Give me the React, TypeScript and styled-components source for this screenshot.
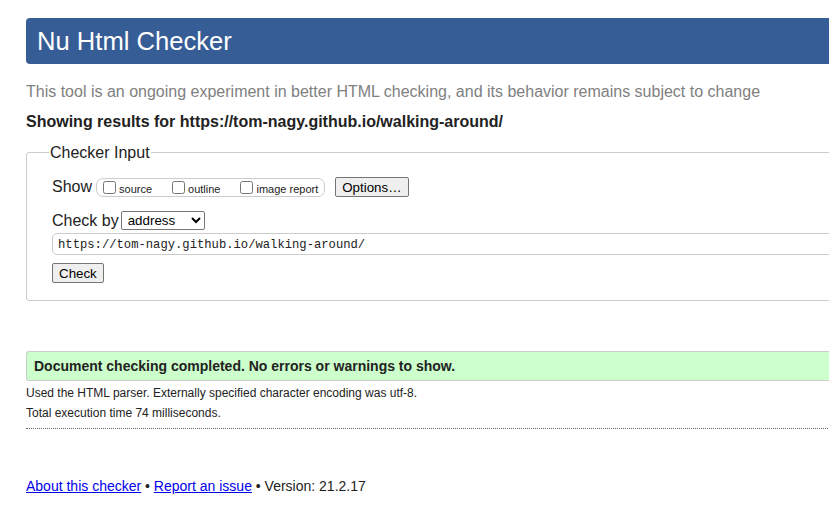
import React from 'react'
import styled, { createGlobalStyle } from 'styled-components'

const GlobalStyle = createGlobalStyle`
  html, body {
    margin: 0;
    padding: 0;
    background: #fff;
    overflow: hidden;
  }
  body {
    font-family: "Liberation Sans", Arial, sans-serif;
    color: #222;
  }
`

const Page = styled.div`
  width: 1000px;
  padding: 18px 0 0 26px;
`

const Header = styled.h1`
  margin: 0;
  height: 46px;
  line-height: 46px;
  padding-left: 11px;
  background: #365d95;
  color: #fff;
  font-size: 25.6px;
  font-weight: normal;
  border-radius: 4px 0 0 4px;
`

const Intro = styled.p`
  margin: 18px 0 0;
  font-size: 16px;
  line-height: 19px;
  color: #808080;
`

const ResultsFor = styled.p`
  margin: 11px 0 0;
  font-size: 16px;
  line-height: 19px;
  font-weight: bold;
`

const Fieldset = styled.fieldset`
  margin: 12px 0 0;
  padding: 15px 20px 17px 25px;
  border: 1px solid #ccc;
  border-radius: 3px 0 0 3px;
  min-inline-size: 0;
`

const Legend = styled.legend`
  margin-left: -3px;
  padding: 0 1px;
  font-size: 16px;
  line-height: 19px;
`

const Row = styled.div`
  display: flex;
  align-items: center;
  font-size: 16px;
  margin-top: ${({ $gap }: { $gap?: number }) => $gap ?? 0}px;
`

const Label = styled.span`
  margin-right: 4px;
`

const OptionGroup = styled.span`
  display: inline-flex;
  align-items: center;
  gap: 20px;
  height: 17px;
  padding: 0 6px 0 6px;
  border: 1px solid #ccc;
  border-radius: 7px;
  margin-right: 10px;
`

const Option = styled.label`
  display: inline-flex;
  align-items: center;
  font-size: 11px;

  input {
    width: 13px;
    height: 13px;
    margin: 0 3px 0 0;
  }
`

const OptionText = styled.span`
  padding-top: 3px;
`

const Button = styled.button`
  font-family: "Liberation Sans", Arial, sans-serif;
  font-size: 13.33px;
  height: 20px;
  padding: 0 6px;
  background: #efefef;
  color: #000;
  border: 1px solid #767676;
  border-radius: 2px;
`

const Select = styled.select`
  font-family: "Liberation Sans", Arial, sans-serif;
  font-size: 13.33px;
  width: 84px;
  height: 19px;
  margin-left: -2px;
  padding: 0 2px;
  border: 1px solid #767676;
  border-radius: 2px;
  background: #fff;
  color: #000;
`

const UrlInput = styled.input`
  box-sizing: border-box;
  width: 100%;
  height: 22px;
  margin-top: 3px;
  padding: 1px 5px 0;
  font-family: "Liberation Mono", "DejaVu Sans Mono", monospace;
  font-size: 12.2px;
  color: #222;
  border: 1px solid #ccc;
  border-radius: 5px 0 0 5px;
  outline: none;
`

const Success = styled.div`
  margin-top: 50px;
  height: 28px;
  line-height: 28px;
  padding-left: 7px;
  background: #ccffcc;
  border: 1px solid #ccc;
  border-right: none;
  border-radius: 3px 0 0 3px;
  font-size: 14px;
  font-weight: bold;
`

const Detail = styled.p`
  margin: 0;
  font-size: 12px;
  line-height: 20px;
`

const Details = styled.div`
  padding-top: 2px;
  padding-bottom: 5px;
  border-bottom: 1px dotted #666;
`

const Footer = styled.p`
  margin: 49px 0 0;
  font-size: 14px;
  line-height: 17px;
  color: #222;

  a {
    color: #0000ee;
    text-decoration: underline;
  }
`

const url = 'https://tom-nagy.github.io/walking-around/'

export default function App() {
  return (
    <Page>
      <GlobalStyle />
      <Header>Nu Html Checker</Header>
      <Intro>
        This tool is an ongoing experiment in better HTML checking, and its behavior remains subject to change
      </Intro>
      <ResultsFor>Showing results for {url}</ResultsFor>
      <Fieldset>
        <Legend>Checker Input</Legend>
        <Row>
          <Label>Show</Label>
          <OptionGroup>
            <Option>
              <input type="checkbox" />
              <OptionText>source</OptionText>
            </Option>
            <Option>
              <input type="checkbox" />
              <OptionText>outline</OptionText>
            </Option>
            <Option>
              <input type="checkbox" />
              <OptionText>image report</OptionText>
            </Option>
          </OptionGroup>
          <Button type="button">Options…</Button>
        </Row>
        <Row $gap={14}>
          <Label>Check by</Label>
          <Select defaultValue="address">
            <option value="address">address</option>
            <option value="file">file upload</option>
            <option value="text">text input</option>
          </Select>
        </Row>
        <UrlInput defaultValue={url} />
        <Row $gap={8}>
          <Button type="button">Check</Button>
        </Row>
      </Fieldset>
      <Success>Document checking completed. No errors or warnings to show.</Success>
      <Details>
        <Detail>Used the HTML parser. Externally specified character encoding was utf-8.</Detail>
        <Detail>Total execution time 74 milliseconds.</Detail>
      </Details>
      <Footer>
        <a href="#">About this checker</a> • <a href="#">Report an issue</a> • Version: 21.2.17
      </Footer>
    </Page>
  )
}
